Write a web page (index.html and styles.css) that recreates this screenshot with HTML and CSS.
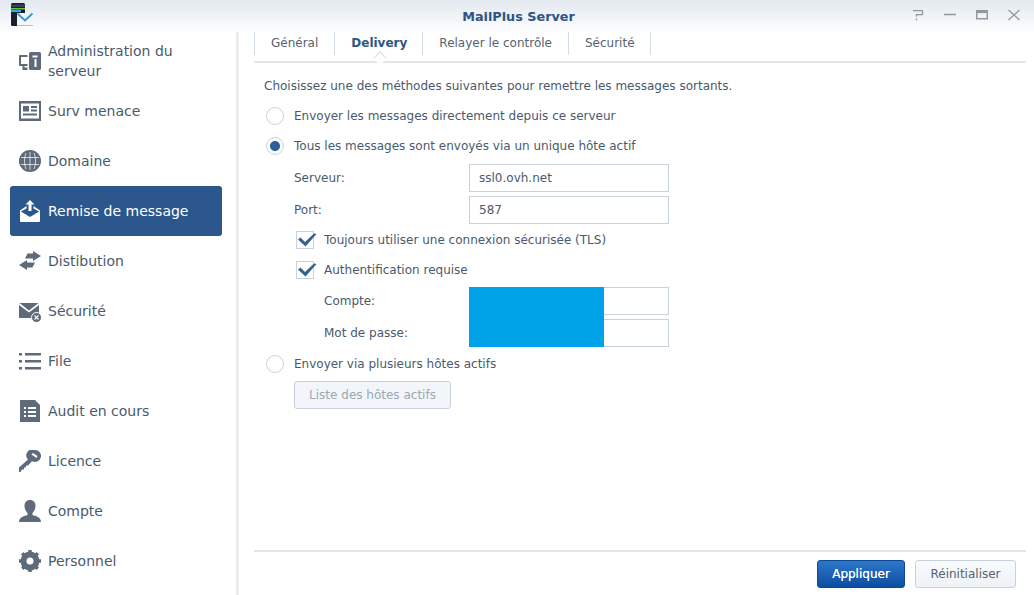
FILE: index.html
```html
<!DOCTYPE html>
<html lang="fr">
<head>
<meta charset="utf-8">
<title>MailPlus Server</title>
<link rel="stylesheet" href="styles.css">
</head>
<body>
<div class="window">
  <header class="titlebar">
    <svg class="logo" width="24" height="27" viewBox="0 0 24 27">
      <rect x="1" y="3" width="14" height="23" rx="1.500" fill="#18202e"/>
      <rect x="1" y="4.500" width="14" height="2.500" fill="#34435a"/>
      <rect x="1" y="8" width="14" height="1.500" fill="#6fbf3a"/>
      <rect x="1" y="10" width="10" height="2" fill="#38a8e8"/>
      <rect x="7" y="13" width="16" height="13" fill="#f4f6f8"/>
      <rect x="7" y="25" width="16" height="1" fill="#b9bfc6"/>
      <path d="M7.500 13.500l7.500 7 7.500-7" fill="none" stroke="#2f96e0" stroke-width="1.800"/>
    </svg>
    <div class="title">MailPlus Server</div>
    <div class="controls">
      <svg width="14" height="14" viewBox="0 0 14 14"><path d="M1 2.700h9.500v4H4.500v2M4.500 10.500v1.800" fill="none" stroke="#92979d" stroke-width="1.300"/></svg>
      <svg width="14" height="14" viewBox="0 0 14 14"><path d="M0 6.500h12" stroke="#92979d" stroke-width="1.500"/></svg>
      <svg width="14" height="14" viewBox="0 0 14 14"><path d="M.7 2.700h10.600v8H.7z" fill="none" stroke="#92979d" stroke-width="1.400"/><path d="M.7 3.800h10.600" stroke="#92979d" stroke-width="2.600"/></svg>
      <svg width="14" height="14" viewBox="0 0 14 14"><path d="M.5 2l11 10M11.500 2L.5 12" stroke="#92979d" stroke-width="1.300"/></svg>
    </div>
  </header>
  <div class="body">
    <nav class="sidebar">
      <a class="nav-item two-line">
        <svg class="ico" viewBox="0 0 22 22"><path fill="#5f6b7a" d="M0 6a1 1 0 0 1 1-1h7.500v2H2v7h6.500v2H5.500v1.500h3V20H3.500v-4H1a1 1 0 0 1-1-1z"/><path fill="#5f6b7a" fill-rule="evenodd" d="M10 3.500a1.500 1.500 0 0 1 1.500-1.500H20.500A1.500 1.500 0 0 1 22 3.500v15a1.500 1.500 0 0 1-1.500 1.500h-9A1.500 1.500 0 0 1 10 18.500zM13.500 5.500v2h5v-2zM15.500 9v8h2V9z"/></svg>
        <span>Administration du serveur</span>
      </a>
      <a class="nav-item">
        <svg class="ico" viewBox="0 0 22 22"><path fill="#5f6b7a" fill-rule="evenodd" d="M0 1h22v20H0zM2 3.500v15h18v-15zM4 6h6v5.500H4zM12 6h6v2h-6zM12 9.500h6v2h-6zM4 13.500h14v2H4z"/></svg>
        <span>Surv menace</span>
      </a>
      <a class="nav-item">
        <svg class="ico" viewBox="0 0 22 22"><circle cx="11" cy="11" r="11" fill="#5f6b7a"/><path d="M2 7.500h18M2 14.500h18M11 2v18M7 3c-2 5-2 11 0 16M15 3c2 5 2 11 0 16" stroke="#fff" stroke-width="1" fill="none" opacity=".7"/></svg>
        <span>Domaine</span>
      </a>
      <a class="nav-item active">
        <svg class="ico" viewBox="0 0 22 22"><path fill="#fff" d="M11 0l4.500 4.500h-3V11h-3V4.500h-3z"/><path fill="#fff" d="M7.500 6v2.500L1.800 11.500 11 17l9.200-5.500-5.700-3V6L21 10.500V21a1 1 0 0 1-1 1H2a1 1 0 0 1-1-1V10.500z"/></svg>
        <span>Remise de message</span>
      </a>
      <a class="nav-item">
        <svg class="ico" viewBox="0 0 22 22"><path fill="#5f6b7a" d="M14 1l8 5-8 5V8.500H6l2.500-5H14zM8 10L0 15l8 5v-2.500h5.500l2.500-5H8z"/></svg>
        <span>Distibution</span>
      </a>
      <a class="nav-item">
        <svg class="ico" viewBox="0 0 22 22"><path fill="#5f6b7a" d="M.5 3h19L10 10.500zM0 5v13h20V5l-10 7.500z"/><circle cx="17.500" cy="17.500" r="5" fill="#5f6b7a" stroke="#fff" stroke-width="1"/><path d="M15.500 15.500l4 4M19.500 15.500l-4 4" stroke="#fff" stroke-width="1.100"/></svg>
        <span>Sécurité</span>
      </a>
      <a class="nav-item">
        <svg class="ico" viewBox="0 0 22 22"><path fill="#5f6b7a" d="M0 3h3v2.500H0zM6 3h16v2.500H6zM0 10h3v2.500H0zM6 10h16v2.500H6zM0 17h3v2.500H0zM6 17h16v2.500H6z"/></svg>
        <span>File</span>
      </a>
      <a class="nav-item">
        <svg class="ico" viewBox="0 0 22 22"><path fill="#5f6b7a" fill-rule="evenodd" d="M1 0h15l5 5v17H1zM5 7v2h2V7zM9 7v2h8V7zM5 11v2h2v-2zM9 11v2h8v-2zM5 15v2h2v-2zM9 15v2h8v-2z"/></svg>
        <span>Audit en cours</span>
      </a>
      <a class="nav-item">
        <svg class="ico" viewBox="0 0 22 22"><path fill="#5f6b7a" fill-rule="evenodd" d="M16 0a6 6 0 1 1-3 11.200L9 15.500H7v2H5v2H3L1.500 22H0v-4.500l9-8A6 6 0 0 1 16 0zM14 3l-1.500 1.500 5 3.500 1-2z"/></svg>
        <span>Licence</span>
      </a>
      <a class="nav-item">
        <svg class="ico" viewBox="0 0 22 22"><path fill="#5f6b7a" d="M11 0c3.500 0 5.500 2.500 5.500 6 0 3-1.500 5.500-3 7v2c3 1 8.500 2 8.500 7H0c0-5 5.500-6 8.500-7v-2C7 11.500 5.500 9 5.500 6 5.500 2.500 7.500 0 11 0z"/></svg>
        <span>Compte</span>
      </a>
      <a class="nav-item">
        <svg class="ico" viewBox="0 0 22 22"><circle cx="11" cy="11" r="6.500" fill="none" stroke="#5f6b7a" stroke-width="6"/><path d="M11 0v22M0 11h22M3.200 3.200l15.600 15.600M18.800 3.200L3.200 18.800" stroke="#5f6b7a" stroke-width="3.500" stroke-dasharray="4 14" fill="none"/></svg>
        <span>Personnel</span>
      </a>
    </nav>
    <main class="main">
      <div class="tabs">
        <div class="tab">Général</div>
        <div class="tab current">Delivery</div>
        <div class="tab">Relayer le contrôle</div>
        <div class="tab last-tab">Sécurité</div>
      </div>
      <div class="content">
        <p class="intro">Choisissez une des méthodes suivantes pour remettre les messages sortants.</p>
        <div class="row"><span class="radio"></span><span>Envoyer les messages directement depuis ce serveur</span></div>
        <div class="row"><span class="radio on"></span><span>Tous les messages sont envoyés via un unique hôte actif</span></div>
        <div class="field first lvl1"><label>Serveur:</label><div class="input">ssl0.ovh.net</div></div>
        <div class="field port lvl1"><label>Port:</label><div class="input">587</div></div>
        <div class="row check-row">
          <svg class="check" width="20" height="18" viewBox="0 0 20 18"><rect x=".5" y=".5" width="17" height="17" fill="#fff" stroke="#c8d2dd"/><path fill="#34608f" d="M2 8.500l2.500-2 4.500 4.500L18 2.500l2.500.5L9.500 15.500z"/></svg>
          <span>Toujours utiliser une connexion sécurisée (TLS)</span>
        </div>
        <div class="row check-row">
          <svg class="check" width="20" height="18" viewBox="0 0 20 18"><rect x=".5" y=".5" width="17" height="17" fill="#fff" stroke="#c8d2dd"/><path fill="#34608f" d="M2 8.500l2.500-2 4.500 4.500L18 2.500l2.500.5L9.500 15.500z"/></svg>
          <span>Authentification requise</span>
        </div>
        <div class="creds">
          <div class="field lvl2"><label>Compte:</label><div class="input"></div></div>
          <div class="field lvl2"><label>Mot de passe:</label><div class="input"></div></div>
          <div class="redact"></div>
        </div>
        <div class="row last"><span class="radio"></span><span>Envoyer via plusieurs hôtes actifs</span></div>
        <button class="btn ghost" disabled>Liste des hôtes actifs</button>
      </div>
      <footer class="footer">
        <button class="btn primary">Appliquer</button>
        <button class="btn plain">Réinitialiser</button>
      </footer>
    </main>
  </div>
</div>
</body>
</html>
```
FILE: styles.css
```css
* { box-sizing: border-box; }
html, body { margin: 0; height: 100%; overflow: hidden; }
body { font-family: "DejaVu Sans", Verdana, sans-serif; font-size: 12px; color: #4a5a6c; background: #fff; }
.window { width: 1034px; height: 595px; display: flex; flex-direction: column; }
.titlebar { height: 32px; flex: none; display: flex; align-items: center; position: relative; background: linear-gradient(#e3e8ef, #fdfefe); }
.logo { position: absolute; left: 10px; top: 0; }
.title { width: 100%; text-align: center; font-weight: bold; font-size: 12.800px; color: #2d5485; padding-left: 3px; }
.controls { position: absolute; right: 12px; top: 8px; display: flex; gap: 18px; }
.body { flex: 1; display: flex; min-height: 0; }
.sidebar { width: 239px; flex: none; padding: 4px 14px 0 10px; border-right: 3px solid #ececec; display: flex; flex-direction: column; }
.nav-item { height: 50px; flex: none; display: flex; align-items: center; gap: 7px; padding-left: 9px; font-size: 14px; line-height: 20px; color: #4a5a6c; border-radius: 3px; }
.nav-item span { display: block; width: 150px; }
.active { background: #2b578c; color: #fff; }
.active span { width: auto; white-space: nowrap; }
.ico { width: 22px; height: 22px; flex: none; }
.main { flex: 1; min-width: 0; padding: 0 8px 0 15px; display: flex; flex-direction: column; }
.tabs { height: 31px; flex: none; display: flex; border-bottom: 2px solid #e3e5e8; align-items: flex-start; }
.tab { height: 23px; line-height: 23px; padding: 0 16px; border-right: 1px solid #d3dde8; color: #56636f; white-space: nowrap; }
.tab:first-child { border-left: 1px solid #d3dde8; }
.current { font-weight: bold; color: #2d5485; position: relative; padding-right: 15px; }
.last-tab { padding-right: 15px; }
.current::after { content: ""; position: absolute; left: 50%; margin-left: -6px; top: 19px; width: 12px; height: 12px; transform: rotate(45deg) scale(.72); background: #fff; border: 1px solid #e3e5e8; border-width: 2px 0 0 2px; }
.content { flex: 1; padding: 14px 0 0 10px; }
.intro { margin: 0 0 12px; line-height: 18px; }
.row { display: flex; align-items: center; height: 18px; margin-bottom: 12px; gap: 10px; padding-left: 2px; }
.radio { width: 18px; height: 18px; flex: none; border-radius: 50%; border: 1px solid #c8d2dd; background: #fff; }
.radio.on { background: radial-gradient(circle, #2b5f9e 0 4.500px, #fff 5.500px); }
.field { display: flex; align-items: center; height: 28px; margin-bottom: 4px; }
.first { margin-top: -3px; }
.port { margin-bottom: 7px; }
.field label { flex: none; }
.lvl1 { padding-left: 30px; }
.lvl1 label { width: 175px; }
.lvl2 label { width: 145px; }
.input { width: 200px; height: 28px; border: 1px solid #c8d2dd; line-height: 26px; padding-left: 9px; background: #fff; color: #4a5a6c; }
.check-row { padding-left: 32px; gap: 8px; margin-bottom: 12px; }
.check { flex: none; overflow: visible; }
.creds { position: relative; padding-left: 60px; margin-top: -4px; margin-bottom: 8px; }
.creds .field:last-of-type { margin-bottom: 0; }
.redact { position: absolute; left: 205px; top: 0; width: 135px; height: 60px; background: #00a2e8; }
.last { margin-bottom: 8px; }
.btn { font-family: inherit; font-size: 12px; height: 28px; border-radius: 3px; padding: 0; }
.ghost { margin-left: 30px; width: 157px; background: #f2f6fa; border: 1px solid #c8d2dd; color: #9aa6b2; }
.footer { height: 45px; flex: none; border-top: 2px solid #e3e5e8; display: flex; justify-content: flex-end; gap: 10px; padding: 8px 10px 0 0; }
.primary { width: 88px; color: #fff; text-shadow: 0 0 .6px #fff; background: linear-gradient(#2f76c9, #0b4ea2); border: 1px solid #0a4a96; }
.plain { width: 101px; color: #56636f; background: linear-gradient(#f9fbfd, #eef2f7); border: 1px solid #c8d2dd; }
```
